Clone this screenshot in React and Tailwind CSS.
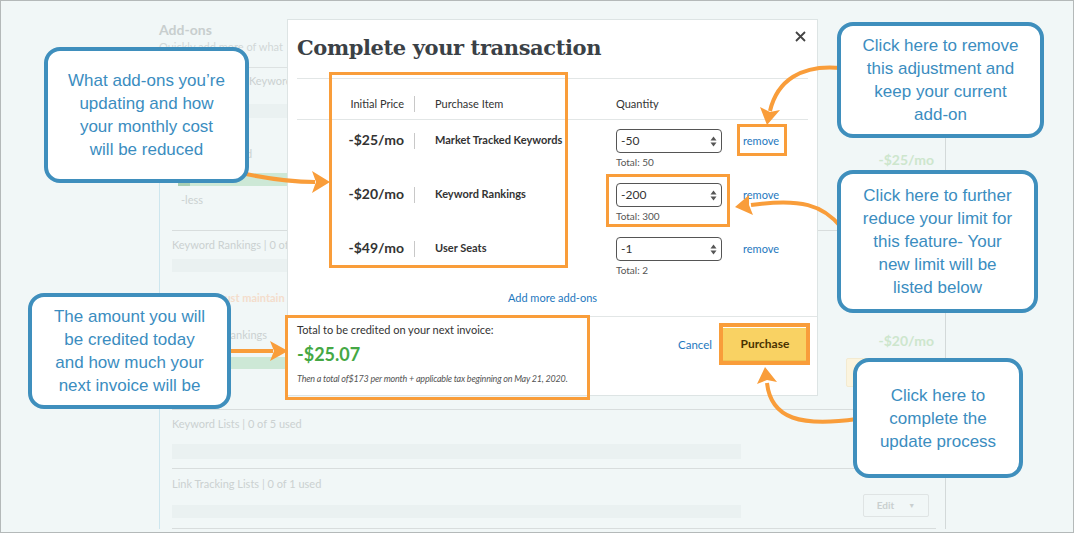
import React from 'react'

const rows = [
  { price: '-$25/mo', item: 'Market Tracked Keywords', qty: '-50', total: 'Total: 50' },
  { price: '-$20/mo', item: 'Keyword Rankings', qty: '-200', total: 'Total: 300' },
  { price: '-$49/mo', item: 'User Seats', qty: '-1', total: 'Total: 2' },
]

const callouts = [
  {
    box: 'left-[43px] top-[46px] w-[205px] h-[136px]',
    lines: ['What add-ons you’re', 'updating and how', 'your monthly cost', 'will be reduced'],
  },
  {
    box: 'left-[836px] top-[21px] w-[207px] h-[116px]',
    lines: ['Click here to remove', 'this adjustment and', 'keep your current', 'add-on'],
  },
  {
    box: 'left-[836px] top-[169px] w-[201px] h-[143px]',
    lines: ['Click here to further', 'reduce your limit for', 'this feature- Your', 'new limit will be', 'listed below'],
  },
  {
    box: 'left-[27px] top-[292px] w-[203px] h-[116px]',
    lines: ['The amount you will', 'be credited today', 'and how much your', 'next invoice will be'],
  },
  {
    box: 'left-[852px] top-[357px] w-[170px] h-[120px]',
    lines: ['Click here to', 'complete the', 'update process'],
  },
]

const highlights = [
  'left-[328px] top-[71px] w-[239px] h-[196px] border-[3px]',
  'left-[736px] top-[123px] w-[50px] h-[32px] border-[3px]',
  'left-[605px] top-[173px] w-[124px] h-[53px] border-[3px]',
  'left-[284px] top-[314px] w-[305px] h-[85px] border-[3px]',
  'left-[718px] top-[322px] w-[91px] h-[42px] border-[4px]',
]

function Spinner() {
  return (
    <svg width="7" height="11" viewBox="0 0 7 11" className="mr-[4px]">
      <path d="M3.5 0.5 L6.5 4.5 L0.5 4.5 Z" fill="#555" />
      <path d="M3.5 10.5 L6.5 6.5 L0.5 6.5 Z" fill="#555" />
    </svg>
  )
}

// faded page behind the dialog
function BackgroundPage() {
  return (
    <div className="pl-[158px] pt-[20px] font-['Lato',sans-serif]">
      <h2 className="text-[14px] leading-[18px] font-bold text-[#c8cece]">Add-ons</h2>
      <p className="mt-[1px] whitespace-nowrap text-[11px] leading-[14px] text-[#d2d8d8]">Quickly add more of what</p>
      <div className="mt-[13px] w-[787px] border-l border-r border-l-[#cde6ee] border-r-[#d3d9d9] pr-[9px] pl-[12px]">
        <div className="border-t border-[#dde2e2]">
          <div className="flex h-[163px] border-b border-[#d8dddd]">
            <div className="flex-1">
              <p className="pt-[6px] text-[11px] leading-[14px] text-[#cbd1d1]">Market Tracked Keywords</p>
              <div className="mt-[16px] h-[14px] w-[569px] bg-[#eaf1f1]" />
              <p className="mt-[29px] ml-[6px] text-[11px] leading-[14px] text-[#cbd1d1]">Market Tracked</p>
              <div className="mt-[12px] ml-[6px] flex h-[13px] w-[420px] items-end bg-[#cde8d6]">
                <div className="h-[6px] w-[12px] bg-[#a9cfb4]" />
              </div>
              <p className="mt-[7px] ml-[9px] text-[11px] leading-[14px] text-[#cbd1d1]">-less</p>
            </div>
            <div className="w-[100px] pt-[83px] pr-[2px] text-right">
              <p className="text-[14px] leading-[18px] font-bold text-[#cde6cd]">-$25/mo</p>
            </div>
          </div>
          <div className="flex h-[179px] border-b border-[#d8dddd]">
            <div className="flex-1">
              <p className="pt-[7px] text-[11px] leading-[14px] text-[#cbd1d1]">Keyword Rankings | 0 of</p>
              <div className="mt-[7px] h-[13px] w-[569px] bg-[#eaf1f1]" />
              <p className="mt-[19px] ml-[9px] whitespace-nowrap text-[11px] leading-[14px] font-bold text-[#f4ddcc]">
                ▲ You must maintain bas
              </p>
              <p className="mt-[23px] ml-[6px] text-[11px] leading-[14px] text-[#cbd1d1]">Keyword Rankings</p>
              <div className="mt-[15px] ml-[6px] h-[12px] w-[420px] bg-[#cde8d6]" />
            </div>
            <div className="flex w-[100px] flex-col items-end pt-[101px] pr-[2px]">
              <p className="text-[14px] leading-[18px] font-bold text-[#cde6cd]">-$20/mo</p>
              <div className="mt-[8px] h-[29px] w-[88px] rounded-[2px] border border-[#f3ead0] bg-[#fbf4de]" />
            </div>
          </div>
          <div className="h-[59px] border-b border-[#d8dddd]">
            <p className="pt-[7px] text-[11px] leading-[14px] text-[#cbd1d1]">Keyword Lists | 0 of 5 used</p>
            <div className="mt-[13px] h-[15px] w-[569px] bg-[#eaf1f1]" />
          </div>
          <div className="flex h-[60px] border-b border-[#d8dddd]">
            <div className="flex-1">
              <p className="pt-[8px] text-[11px] leading-[14px] text-[#cbd1d1]">Link Tracking Lists | 0 of 1 used</p>
              <div className="mt-[14px] h-[13px] w-[569px] bg-[#eaf1f1]" />
            </div>
            <div className="pt-[25px] pr-[7px]">
              <div className="flex h-[23px] w-[66px] items-center justify-center gap-[14px] rounded-[2px] border border-[#dfe4e4] text-[10px] text-[#c9cfcf]">
                <span className="font-bold">Edit</span>
                <span className="text-[7px]">▼</span>
              </div>
            </div>
          </div>
        </div>
      </div>
    </div>
  )
}

function Modal() {
  return (
    <div className="absolute left-[286px] top-[18px] flex h-[377px] w-[531px] flex-col border border-[#dde4e4] bg-white font-['Lato',sans-serif] text-[#333]">
      <div className="mx-[9px] flex h-[59px] justify-between border-b border-[#e2e6e6]">
        <h1 className="pt-[13px] font-['DejaVu_Serif',serif] text-[21px] leading-[30px] font-bold tracking-[-0.4px] text-[#3b4146]">
          Complete your transaction
        </h1>
        <svg width="11" height="11" viewBox="0 0 11 11" className="mt-[11px] mr-[2px]">
          <path d="M1 1 L10 10 M10 1 L1 10" stroke="#444" strokeWidth="1.8" />
        </svg>
      </div>

      <div className="mx-[9px]">
        <div className="flex h-[41px] items-end border-b border-[#e2e6e6] pb-[8px] text-[11px] leading-[14px]">
          <span className="w-[107px] text-right">Initial Price</span>
          <span className="mb-[-1px] ml-[10px] h-[16px] w-px bg-[#c8c8c8]" />
          <span className="ml-[20px] w-[181px]">Purchase Item</span>
          <span>Quantity</span>
        </div>
        {rows.map((row) => (
          <div key={row.item} className="flex h-[54px] items-start pt-[9px]">
            <span className="mt-[2px] w-[107px] text-right text-[14px] leading-[18px] font-bold">{row.price}</span>
            <span className="mt-[4px] ml-[10px] h-[16px] w-px bg-[#c8c8c8]" />
            <span className="mt-[4px] ml-[20px] w-[181px] text-[11px] leading-[14px] font-bold">{row.item}</span>
            <div className="w-[127px]">
              <div className="flex h-[24px] w-[106px] items-center justify-between rounded-[4px] border border-[#555] pl-[4px] text-[12px]">
                <span>{row.qty}</span>
                <Spinner />
              </div>
              <p className="mt-[3px] text-[10px] leading-[13px] text-[#555]">{row.total}</p>
            </div>
            <span className="mt-[5px] text-[11px] leading-[14px] text-[#1e78be]">remove</span>
          </div>
        ))}
      </div>

      <p className="mt-[9px] text-center text-[11px] leading-[14px] text-[#1e78be]">Add more add-ons</p>

      <div className="mt-[11px] flex flex-1 justify-between border-t border-[#e2e6e6] pl-[9px] pr-[10px]">
        <div>
          <p className="pt-[6px] text-[11px] leading-[14px]">Total to be credited on your next invoice:</p>
          <p className="mt-[6px] text-[18px] leading-[22px] font-bold text-[#45a844]">-$25.07</p>
          <p className="mt-[8px] text-[9px] leading-[12px] italic tracking-[-0.2px] text-[#555]">
            Then a total of$173 per month + applicable tax beginning on May 21, 2020.
          </p>
        </div>
        <div className="flex items-start pt-[11px]">
          <span className="mt-[10px] text-[11.5px] leading-[14px] text-[#1e78be]">Cancel</span>
          <button className="ml-[11px] h-[35px] w-[84px] border-b-[3px] border-[#eec455] bg-[#f9d263] text-[12px] font-bold text-[#4a3200]">
            Purchase
          </button>
        </div>
      </div>
    </div>
  )
}

function Arrows() {
  return (
    <svg className="pointer-events-none absolute left-0 top-0" width="1074" height="533" viewBox="0 0 1074 533">
      <g fill="none" stroke="#f99d3a" strokeWidth="4">
        <path d="M240 172 C 268 178 290 181 314 181" />
        <path d="M840 67 C 800 63 776 80 769 110" />
        <path d="M840 226 C 822 204 800 197 750 204" />
        <path d="M228 350 L 272 350" />
        <path d="M856 418 C 800 426 770 418 766 382" />
      </g>
      <g fill="#f99d3a">
        <polygon points="329,181 311,170 315,181 311,192" />
        <polygon points="766,124 779,109 769,111 759,106" />
        <polygon points="734,206 752,214 748,204 748,194" />
        <polygon points="287,350 269,340 273,350 269,360" />
        <polygon points="764,366 776,381 766,379 756,383" />
      </g>
    </svg>
  )
}

export default function App() {
  return (
    <div className="relative h-[533px] w-[1074px] overflow-hidden border border-[#b4b9b9] bg-[#f1f7f7]">
      <BackgroundPage />
      <Modal />
      {highlights.map((cls) => (
        <div key={cls} className={`absolute border-[#f99d3a] ${cls}`} />
      ))}
      <Arrows />
      {callouts.map((c) => (
        <div
          key={c.lines[0]}
          className={`absolute flex flex-col items-center justify-center rounded-[16px] border-[4px] border-[#3f8fbd] bg-white font-['Liberation_Sans',Arial,sans-serif] text-[17px] leading-[23px] text-[#3b8dbf] ${c.box}`}
        >
          {c.lines.map((line) => (
            <span key={line} className="whitespace-nowrap">
              {line}
            </span>
          ))}
        </div>
      ))}
    </div>
  )
}
